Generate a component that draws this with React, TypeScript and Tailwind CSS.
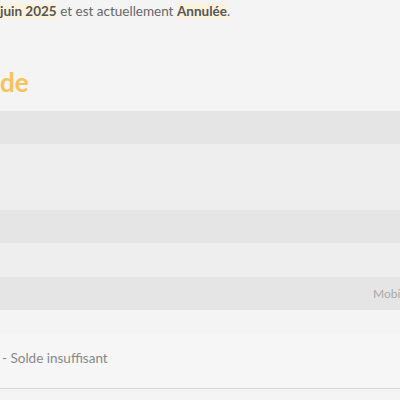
export default function App() {
  const font = { fontFamily: 'Lato, "Open Sans", sans-serif' };
  return (
    <div className="w-[400px] h-[400px] overflow-hidden bg-[#f4f4f4]" style={font}>
      <p className="pt-[3px] text-[13.5px] leading-[17px] text-[#666] whitespace-nowrap">
        <strong className="bg-[#fbf3dd] font-bold text-[#555]">juin 2025</strong> et est actuellement{" "}
        <strong className="bg-[#fbf3dd] font-bold text-[#555]">Annulée</strong>.
      </p>
      <h2 className="mt-[47px] text-[26px] leading-[31px] font-bold text-[#f6c25c]">de</h2>
      <div className="mt-[13px] flex flex-col">
        <div className="h-[33px] bg-[#e5e5e5]" />
        <div className="h-[66px] bg-[#eeeeee]" />
        <div className="h-[33px] bg-[#e5e5e5]" />
        <div className="h-[34px] bg-[#eeeeee]" />
        <div className="h-[33px] bg-[#e5e5e5] flex items-center pl-[373px] overflow-hidden whitespace-nowrap">
          <span className="text-[12px] text-[#aaa]">Mobi</span>
        </div>
      </div>
      <div className="mt-[25px] h-[54px] bg-[#f6f6f6] border-b border-[#d8d8d8] flex items-center pb-[6px]">
        <span className="pl-[2px] text-[13.5px] text-[#888]">- Solde insuffisant</span>
      </div>
    </div>
  );
}
